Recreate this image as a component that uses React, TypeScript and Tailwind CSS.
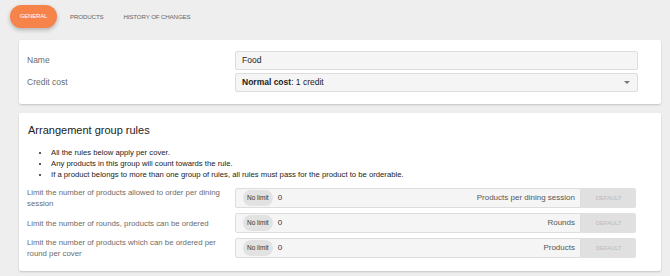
import React from 'react';

interface Rule {
  label: string;
  unit: string;
}

const rules: Rule[] = [
  { label: 'Limit the number of products allowed to order per dining session', unit: 'Products per dining session' },
  { label: 'Limit the number of rounds, products can be ordered', unit: 'Rounds' },
  { label: 'Limit the number of products which can be ordered per round per cover', unit: 'Products' },
];

const bullets = [
  'All the rules below apply per cover.',
  'Any products in this group will count towards the rule.',
  'If a product belongs to more than one group of rules, all rules must pass for the product to be orderable.',
];

const App: React.FC = () => {
  return (
    <div className="w-[670px] h-[276px] bg-[#eeeeee] overflow-hidden font-['Liberation_Sans',Arial,sans-serif]">
      {/* tabs */}
      <div className="flex items-center h-[33px] pl-[10px] pt-[5px] pb-[5px]">
        <div className="h-[23px] w-[47px] rounded-full bg-[#f5834a] shadow-[0_2px_4px_rgba(0,0,0,0.25)] flex items-center justify-center text-[6px] text-white tracking-tight">
          GENERAL
        </div>
        <div className="ml-[13px] text-[6.2px] text-[#666] tracking-tight">PRODUCTS</div>
        <div className="ml-[20px] text-[6.2px] text-[#666] tracking-tight">HISTORY OF CHANGES</div>
      </div>

      {/* general card */}
      <div className="mt-[7px] ml-[19px] w-[642px] bg-white rounded-[2px] shadow-[0_1px_2px_rgba(0,0,0,0.18)] pt-[11px] pb-[12px] pl-[8px] pr-[23px] flex flex-col gap-[3px]">
        <div className="flex items-center">
          <div className="w-[208px] text-[8.5px] text-[#6b6b6b]">Name</div>
          <div className="flex-1 h-[19px] bg-[#f5f5f5] border border-[#dddddd] rounded-[2px] flex items-center px-[6px] text-[8.5px] text-[#222]">
            Food
          </div>
        </div>
        <div className="flex items-center">
          <div className="w-[208px] text-[8.5px] text-[#6b6b6b]">Credit cost</div>
          <div className="flex-1 h-[19px] bg-[#f5f5f5] border border-[#dddddd] rounded-[2px] flex items-center px-[6px] text-[8.5px] text-[#222]">
            <span className="font-bold">Normal cost</span>: 1 credit
            <span className="ml-auto mr-[1px] w-0 h-0 border-l-[3px] border-r-[3px] border-t-[3px] border-l-transparent border-r-transparent border-t-[#777]"></span>
          </div>
        </div>
      </div>

      {/* rules card */}
      <div className="mt-[9px] ml-[19px] w-[642px] bg-white rounded-[2px] shadow-[0_1px_2px_rgba(0,0,0,0.18)] pt-[10px] pb-[13px] pl-[8px] pr-[25px]">
        <h2 className="text-[11px] text-[#222] leading-[14px] pl-[1px]">Arrangement group rules</h2>
        <ul className="mt-[10px] pl-[23px] list-disc text-[7.7px] text-[#222] leading-[11px]">
          {bullets.map(b => (
            <li key={b} className="pl-[1px]">{b}</li>
          ))}
        </ul>
        <div className="mt-[8px] flex flex-col gap-[5px]">
          {rules.map(rule => (
            <div key={rule.unit} className="flex items-center h-[20px]">
              <div className="w-[208px] pr-[10px] text-[7.8px] leading-[11px] text-[#6b6b6b]">{rule.label}</div>
              <div className="flex-1 h-[20px] bg-[#f5f5f5] border border-[#dddddd] rounded-l-[2px] flex items-center pl-[7px] pr-[5px] text-[8px] text-[#333]">
                <span className="h-[16px] px-[4px] rounded-full bg-[#e2e2e2] flex items-center text-[6.5px] text-[#333]">No limit</span>
                <span className="ml-[5px]">0</span>
                <span className="ml-auto text-[#555]">{rule.unit}</span>
              </div>
              <div className="w-[55px] h-[20px] bg-[#e0e0e0] rounded-r-[2px] flex items-center justify-center text-[6px] text-[#bbb] tracking-tight">
                DEFAULT
              </div>
            </div>
          ))}
        </div>
      </div>
    </div>
  );
};

export default App;
